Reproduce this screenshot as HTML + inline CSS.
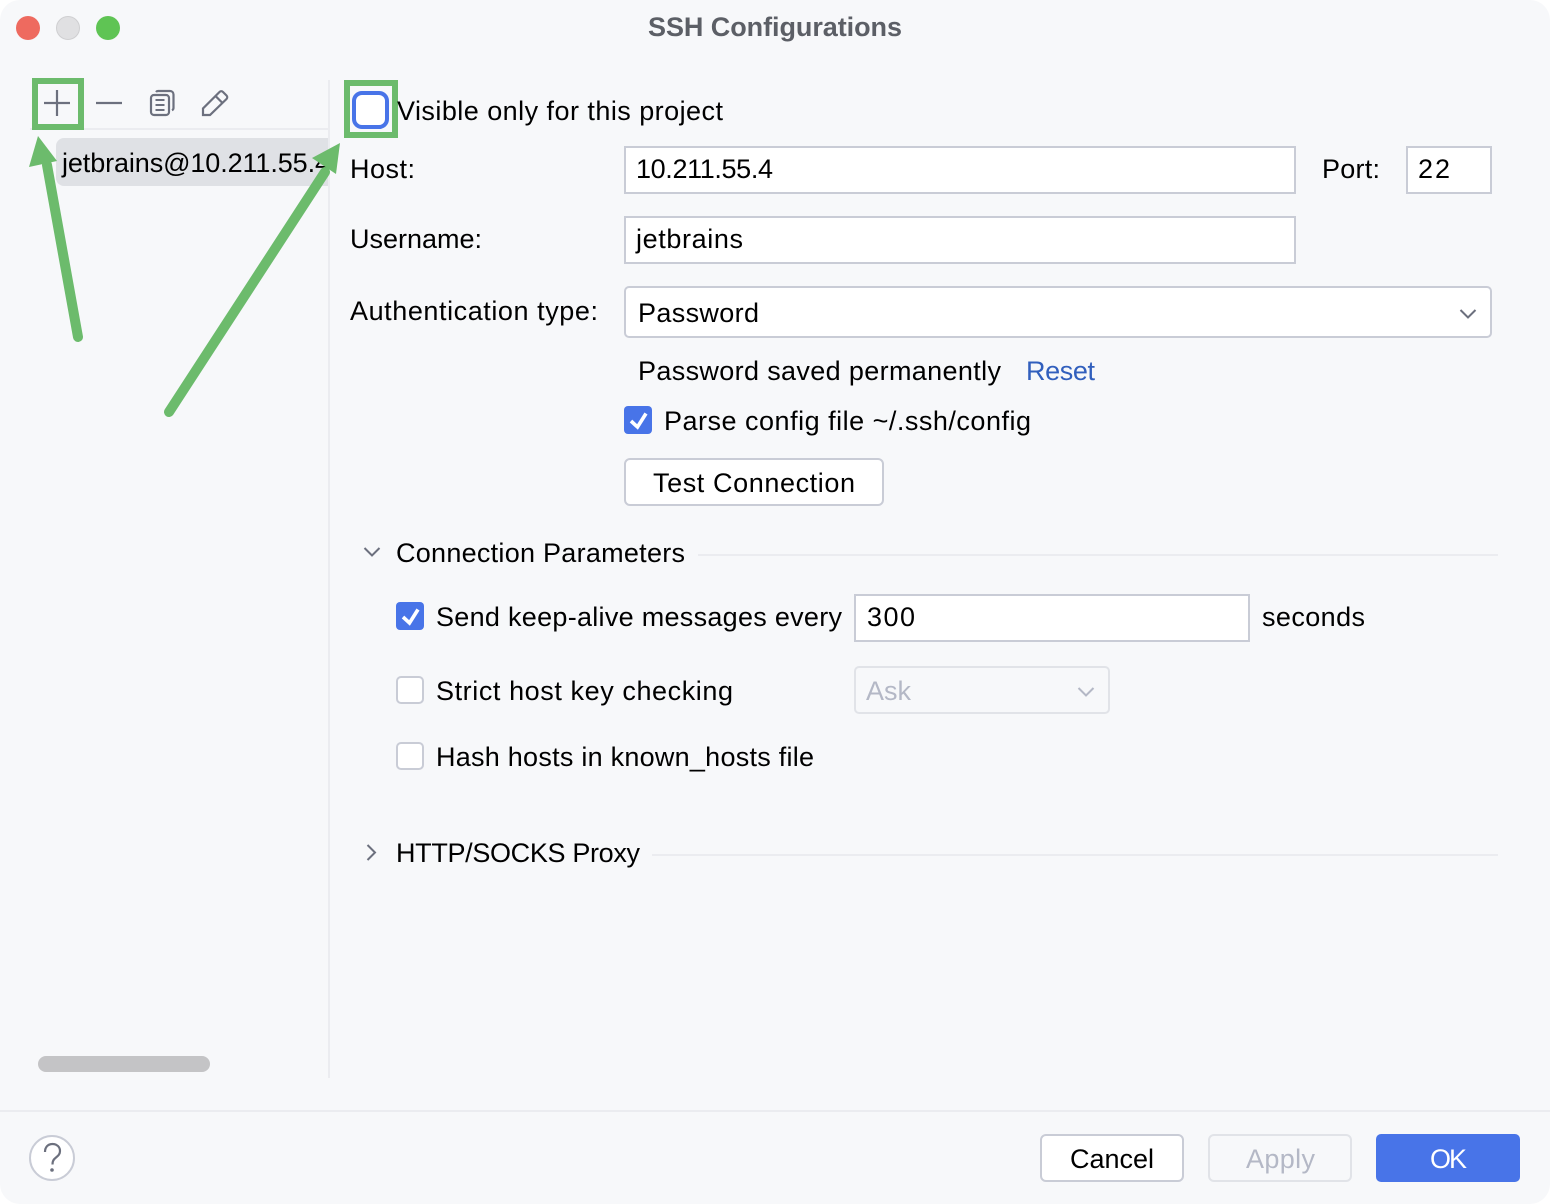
<!DOCTYPE html>
<html><head><meta charset="utf-8"><style>
html,body{margin:0;padding:0;background:#fff;width:1550px;height:1204px;overflow:hidden}
svg{display:block}
text{font-family:"Liberation Sans",sans-serif;font-size:27px;fill:#000}
</style></head><body>
<svg width="1550" height="1204" viewBox="0 0 1550 1204" xmlns="http://www.w3.org/2000/svg">
<rect width="1550" height="1204" rx="20" fill="#f7f8fa"/>
<circle cx="28" cy="28" r="12" fill="#ee6a5f"/>
<circle cx="68" cy="28" r="11.5" fill="#e0e0e2" stroke="#cfcfd1"/>
<circle cx="108" cy="28" r="12" fill="#5fc454"/>
<text x="648" y="36" textLength="254" lengthAdjust="spacing" style="font-weight:700;fill:#5c5f66;font-size:27px">SSH Configurations</text>

<rect x="328" y="80" width="2" height="998" fill="#ebecf0"/>
<rect x="30" y="128" width="298" height="2" fill="#ebecf0"/>
<path d="M64 138H328V186H64a8 8 0 0 1-8-8V146a8 8 0 0 1 8-8Z" fill="#dfe1e5"/>
<svg x="56" y="138" width="272" height="48" viewBox="56 138 272 48"><text x="62" y="172" textLength="268" lengthAdjust="spacing">jetbrains@10.211.55.4</text></svg>
<rect x="38" y="1056" width="172" height="16" rx="8" fill="#c4c4c6"/>

<g fill="none" stroke="#6c707e" stroke-width="2.2">
<path d="M57 90v26M44 103h26"/>
<path d="M96 103h26"/>
<rect x="151" y="95" width="18" height="20" rx="3"/>
<path d="M156 92c.5-.7 1-1 2-1H170c2 0 3.500 1.500 3.500 3.500V108c0 1-.5 1.800-1.500 2.300"/>
<path d="M155.500 100h9M155.500 105h9M155.500 110h9" stroke-width="2"/>
<path d="M203 115v-6.500L219.500 92a2.500 2.500 0 0 1 3.500 0l3.500 3.500a2.500 2.500 0 0 1 0 3.500L210 115Z"/>
<path d="M215.500 96l7 7"/>
</g>

<rect x="35" y="81" width="46" height="46" fill="none" stroke="#6cbb6c" stroke-width="6"/>
<rect x="347" y="83" width="48" height="52" fill="none" stroke="#6cbb6c" stroke-width="6"/>
<rect x="354" y="93" width="33" height="34" rx="8" fill="#fff" stroke="#4874e8" stroke-width="4"/>

<path d="M78 337L47 165" stroke="#6cbb6c" stroke-width="10" stroke-linecap="round" fill="none"/>
<path d="M38 136L29 167L57 161Z" fill="#6cbb6c"/>
<path d="M169 412L325 172" stroke="#6cbb6c" stroke-width="10" stroke-linecap="round" fill="none"/>
<path d="M340 143L312 158L336 174Z" fill="#6cbb6c"/>

<text x="397" y="120" textLength="326" lengthAdjust="spacing">Visible only for this project</text>
<text x="350" y="178" textLength="65" lengthAdjust="spacing">Host:</text>
<rect x="625" y="147" width="670" height="46" fill="#fff" stroke="#c9ccd6" stroke-width="2"/>
<text x="636" y="178" textLength="137" lengthAdjust="spacing">10.211.55.4</text>
<text x="1322" y="178" textLength="58" lengthAdjust="spacing">Port:</text>
<rect x="1407" y="147" width="84" height="46" fill="#fff" stroke="#c9ccd6" stroke-width="2"/>
<text x="1418" y="178" textLength="32" lengthAdjust="spacing">22</text>

<text x="350" y="248" textLength="132" lengthAdjust="spacing">Username:</text>
<rect x="625" y="217" width="670" height="46" fill="#fff" stroke="#c9ccd6" stroke-width="2"/>
<text x="636" y="248" textLength="107" lengthAdjust="spacing">jetbrains</text>

<text x="350" y="320" textLength="248" lengthAdjust="spacing">Authentication type:</text>
<rect x="625" y="287" width="866" height="50" rx="4" fill="#fff" stroke="#c9ccd6" stroke-width="2"/>
<text x="638" y="322" textLength="121" lengthAdjust="spacing">Password</text>
<path d="M1460.500 310l7.500 7.500l7.500-7.500" fill="none" stroke="#6c707e" stroke-width="2"/>

<text x="638" y="380" textLength="363" lengthAdjust="spacing">Password saved permanently</text>
<text x="1026" y="380" textLength="69" lengthAdjust="spacing" style="fill:#315fbd">Reset</text>

<rect x="624" y="406" width="28" height="28" rx="4" fill="#4874e8"/>
<path d="M631 421l6.500 6l8.500-13.500" fill="none" stroke="#fff" stroke-width="3.600"/>
<text x="664" y="430" textLength="367" lengthAdjust="spacing">Parse config file ~/.ssh/config</text>

<rect x="625" y="459" width="258" height="46" rx="5" fill="#fff" stroke="#c9ccd6" stroke-width="2"/>
<text x="653" y="492" textLength="202" lengthAdjust="spacing">Test Connection</text>

<path d="M364.500 548l7.500 7.500l7.500-7.500" fill="none" stroke="#6c707e" stroke-width="2"/>
<text x="396" y="562" textLength="289" lengthAdjust="spacing">Connection Parameters</text>
<rect x="698" y="554" width="800" height="2" fill="#ebecf0"/>

<rect x="396" y="602" width="28" height="28" rx="4" fill="#4874e8"/>
<path d="M403 617l6.500 6l8.500-13.500" fill="none" stroke="#fff" stroke-width="3.600"/>
<text x="436" y="626" textLength="406" lengthAdjust="spacing">Send keep-alive messages every</text>
<rect x="855" y="595" width="394" height="46" fill="#fff" stroke="#c9ccd6" stroke-width="2"/>
<text x="867" y="626" textLength="48" lengthAdjust="spacing">300</text>
<text x="1262" y="626" textLength="103" lengthAdjust="spacing">seconds</text>

<rect x="397" y="677" width="26" height="26" rx="4" fill="#fff" stroke="#c9ccd6" stroke-width="2"/>
<text x="436" y="700" textLength="297" lengthAdjust="spacing">Strict host key checking</text>
<rect x="855" y="667" width="254" height="46" rx="4" fill="#f7f8fa" stroke="#e1e3e8" stroke-width="2"/>
<text x="866" y="700" textLength="45" lengthAdjust="spacing" style="fill:#b4b8c6">Ask</text>
<path d="M1078.500 688l7.500 7.500l7.500-7.500" fill="none" stroke="#b4b8c6" stroke-width="2"/>

<rect x="397" y="743" width="26" height="26" rx="4" fill="#fff" stroke="#c9ccd6" stroke-width="2"/>
<text x="436" y="766" textLength="378" lengthAdjust="spacing">Hash hosts in known_hosts file</text>

<path d="M367.500 845l7.500 7.500l-7.500 7.500" fill="none" stroke="#6c707e" stroke-width="2"/>
<text x="396" y="862" textLength="244" lengthAdjust="spacing">HTTP/SOCKS Proxy</text>
<rect x="652" y="854" width="846" height="2" fill="#ebecf0"/>

<rect x="0" y="1110" width="1550" height="2" fill="#ebecf0"/>
<circle cx="52" cy="1158" r="22" fill="#fff" stroke="#c9ccd6" stroke-width="2"/>
<path d="M45 1152c0-5 3-8 7.500-8s7.500 3 7.500 7c0 3-1.500 4.500-4 6.500c-2.500 2-3.500 3.500-3.500 7" fill="none" stroke="#6c707e" stroke-width="2.200"/>
<circle cx="52" cy="1170" r="1.800" fill="#6c707e"/>

<rect x="1041" y="1135" width="142" height="46" rx="5" fill="#fff" stroke="#c9ccd6" stroke-width="2"/>
<text x="1070" y="1168" textLength="84" lengthAdjust="spacing">Cancel</text>
<rect x="1209" y="1135" width="142" height="46" rx="5" fill="#f7f8fa" stroke="#e1e3e8" stroke-width="2"/>
<text x="1246" y="1168" textLength="69" lengthAdjust="spacing" style="fill:#b4b8c6">Apply</text>
<rect x="1376" y="1134" width="144" height="48" rx="5" fill="#4874e8"/>
<text x="1430" y="1168" textLength="37" lengthAdjust="spacing" style="fill:#fff">OK</text>
</svg>
</body></html>
